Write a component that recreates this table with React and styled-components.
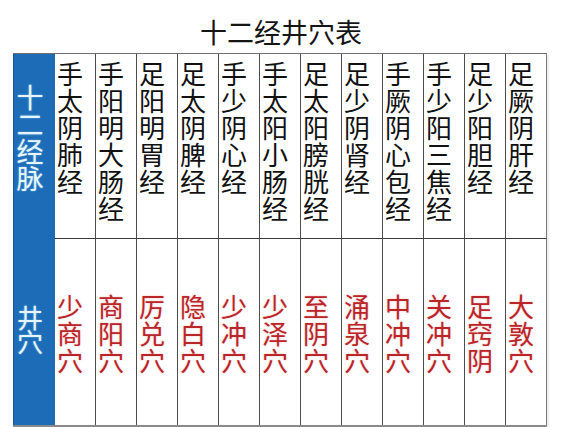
import React from "react";
import styled, { createGlobalStyle } from "styled-components";

const GlobalStyle = createGlobalStyle`
  html, body {
    margin: 0;
    padding: 0;
    background: #ffffff;
  }
  body {
    font-family: "Noto Sans CJK SC", "Noto Sans", sans-serif;
  }
`;

const Page = styled.div`
  width: 562px;
  height: 427px;
  padding-top: 16px;
  box-sizing: border-box;
  display: flex;
  flex-direction: column;
  align-items: flex-start;
`;

const Title = styled.h1`
  align-self: stretch;
  margin: 0 0 5px;
  font-size: 27px;
  line-height: 32px;
  font-weight: 400;
  text-align: center;
  color: #151515;
`;

const Table = styled.div`
  margin-left: 13px;
  display: grid;
  grid-template-columns: 42px repeat(12, 41px);
  grid-template-rows: 185px 186px;
  border-top: 1px solid #6f6f6f;
  border-bottom: 2px solid #8a8a8a;
  box-shadow: 2px 2px 2px rgba(0, 0, 0, 0.08);
`;

const Label = styled.div`
  background: #1d6cb8;
  border-left: 1px solid #17558f;
  display: flex;
  align-items: center;
  justify-content: center;
  padding-bottom: ${(p) => p.$lift || 0}px;
  padding-right: 9px;
  box-sizing: border-box;
  color: #e4f6ff;
  font-size: ${(p) => p.$size}px;
  line-height: ${(p) => p.$line}px;
  width: 42px;
  word-break: break-all;
  text-align: center;
`;

const LabelText = styled.span`
  width: 1em;
  text-shadow: 0 0 2px rgba(180, 235, 255, 0.6);
`;

const Cell = styled.div`
  border-right: 1px solid ${(p) => (p.$last ? "#7a7a7a" : "#4d4d4d")};
  border-bottom: ${(p) => (p.$top ? "1px solid #3a3a3a" : "none")};
  box-sizing: border-box;
  padding-left: 2px;
  display: flex;
  flex-direction: column;
  justify-content: ${(p) => (p.$top ? "flex-start" : "center")};
  padding-top: ${(p) => (p.$top ? 5 : 0)}px;
  background: #ffffff;
`;

const Chars = styled.span`
  width: 1em;
  font-size: 26px;
  line-height: 27px;
  word-break: break-all;
  color: ${(p) => (p.$red ? "#b8262a" : "#111111")};
  text-shadow: ${(p) => (p.$red ? "0 0 2px rgba(240, 120, 120, 0.55)" : "none")};
`;

const meridians = [
  ["手太阴肺经", "少商穴"],
  ["手阳明大肠经", "商阳穴"],
  ["足阳明胃经", "厉兑穴"],
  ["足太阴脾经", "隐白穴"],
  ["手少阴心经", "少冲穴"],
  ["手太阳小肠经", "少泽穴"],
  ["足太阳膀胱经", "至阴穴"],
  ["足少阴肾经", "涌泉穴"],
  ["手厥阴心包经", "中冲穴"],
  ["手少阳三焦经", "关冲穴"],
  ["足少阳胆经", "足窍阴"],
  ["足厥阴肝经", "大敦穴"],
];

export default function App() {
  return (
    <>
      <GlobalStyle />
      <Page>
        <Title>十二经井穴表</Title>
        <Table>
          <Label $size={27} $line={27} $lift={20} style={{ gridRow: 1, gridColumn: 1 }}>
            <LabelText>十二经脉</LabelText>
          </Label>
          {meridians.map(([name], i) => (
            <Cell key={name} $top $last={i === 11} style={{ gridRow: 1, gridColumn: i + 2 }}>
              <Chars>{name}</Chars>
            </Cell>
          ))}
          <Label $size={26} $line={24} $lift={6} style={{ gridRow: 2, gridColumn: 1 }}>
            <LabelText>井穴</LabelText>
          </Label>
          {meridians.map(([name, point], i) => (
            <Cell key={point + i} $last={i === 11} style={{ gridRow: 2, gridColumn: i + 2 }}>
              <Chars $red>{point}</Chars>
            </Cell>
          ))}
        </Table>
      </Page>
    </>
  );
}
